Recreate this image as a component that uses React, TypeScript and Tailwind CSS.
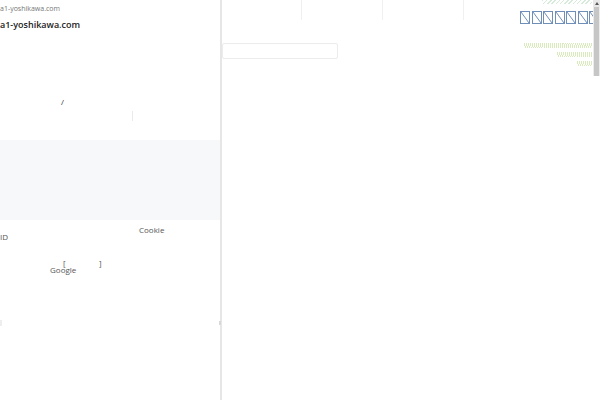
import React from "react";

const Tofu = () => (
  <svg width="10" height="13" viewBox="0 0 10 13" className="shrink-0">
    <rect x="0.5" y="0.5" width="9" height="12" fill="none" stroke="#6f8fb8" strokeWidth="1" />
    <line x1="1" y1="1" x2="9" y2="12" stroke="#6f8fb8" strokeWidth="1" />
  </svg>
);

export default function App() {
  return (
    <div className="relative w-[600px] h-[400px] overflow-hidden bg-white font-['Open_Sans',sans-serif]">
      {/* background page */}
      <div className="absolute inset-0 flex">
        <div className="w-[222px]" />
        <div className="flex-1 flex flex-col">
          <div className="flex h-[20px]">
            <div className="w-[80px] border-r border-[#f0f0f0]" />
            <div className="w-[81px] border-r border-[#f0f0f0]" />
            <div className="w-[81px] border-r border-[#f0f0f0]" />
            <div className="flex-1 relative">
              <div className="absolute right-[8px] top-[-4px] h-[8px] w-[50px] bg-[repeating-linear-gradient(135deg,#d5ead8_0_1px,transparent_1px_3px)]" />
              <div className="absolute left-[56px] top-[11px] flex gap-[1.5px]">
                <Tofu /><Tofu /><Tofu /><Tofu /><Tofu /><Tofu /><Tofu />
              </div>
            </div>
          </div>
          <div className="flex mt-[23px]">
            <div className="w-[116px] h-[16px] border border-[#ececec] rounded-[2px]" />
            <div className="flex-1 flex flex-col items-end pr-[8px] gap-[4px]">
              <div className="w-[68px] h-[5px] bg-[repeating-linear-gradient(100deg,#d9ebbd_0_1px,transparent_1px_2px)]" />
              <div className="w-[35px] h-[5px] bg-[repeating-linear-gradient(100deg,#d9ebbd_0_1px,transparent_1px_2px)]" />
              <div className="w-[15px] h-[5px] bg-[repeating-linear-gradient(100deg,#d9ebbd_0_1px,transparent_1px_2px)]" />
            </div>
          </div>
        </div>
      </div>

      {/* scrollbar */}
      <div className="absolute right-0 top-0 w-[7px] h-[76px] flex flex-col bg-[#ececec]">
        <div className="h-[7px] flex items-center justify-center bg-[#e8e8e8]">
          <div className="w-0 h-0 border-l-[2px] border-r-[2px] border-b-[3px] border-l-transparent border-r-transparent border-b-[#555]" />
        </div>
        <div className="flex-1 bg-[#c6c6c6] mx-[1px]" />
      </div>

      {/* left modal */}
      <div className="absolute left-0 top-0 w-[222px] h-[400px] bg-white border-r-2 border-[#e6e6e6] flex flex-col">
        <div className="pt-[4px] text-[7px] leading-[9px] text-[#777]">a1-yoshikawa.com</div>
        <div className="mt-[6px] text-[9px] leading-[12px] font-semibold text-[#222]">a1-yoshikawa.com</div>
        <div className="h-[66px]" />
        <div className="pl-[61px] text-[8px] leading-[10px] text-[#333]">/</div>
        <div className="mt-[4px] w-[133px] h-[10px] border-r border-[#eaeaea]" />
        <div className="h-[19px]" />
        <div className="h-[80px] bg-[#f7f8fa]" />
        <div className="relative h-[60px] text-[8px] text-[#555] leading-[10px]">
          <div className="absolute left-[139px] top-[5px]">Cookie</div>
          <div className="absolute left-0 top-[12px]">ID</div>
          <div className="absolute left-[63px] top-[38px]">[</div>
          <div className="absolute left-[99px] top-[38px]">]</div>
          <div className="absolute left-[50px] top-[45px]">Google</div>
        </div>
      </div>
      <div className="absolute left-[0px] top-[320px] w-[2px] h-[6px] bg-[#eee]" />
      <div className="absolute left-[219px] top-[321px] w-[2px] h-[4px] bg-[#d8d8d8]" />
    </div>
  );
}
